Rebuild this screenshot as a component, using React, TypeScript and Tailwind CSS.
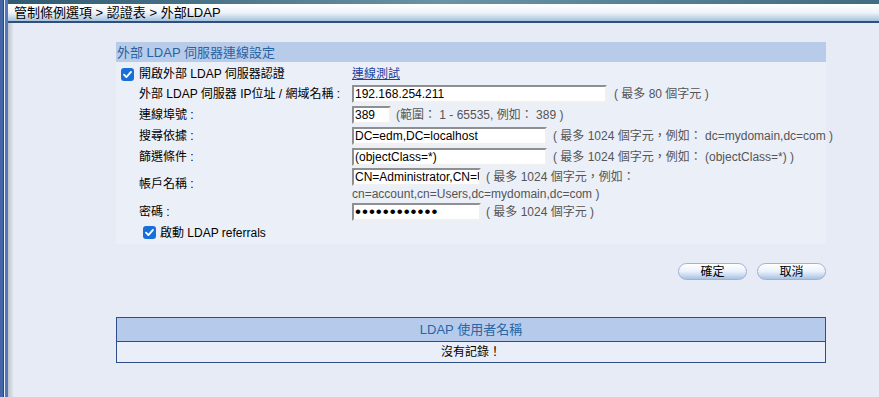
import React from "react";

const font = { fontFamily: '"Liberation Sans", "Noto Sans CJK TC", sans-serif' };

function Check({ className = "" }: { className?: string }) {
  return (
    <span className={`inline-flex h-[13px] w-[13px] items-center justify-center rounded-[3px] bg-[#1a6fd6] ${className}`}>
      <svg width="11" height="11" viewBox="0 0 12 12">
        <path d="M2.2 6.2 L4.8 8.8 L9.8 3.2" fill="none" stroke="#fff" strokeWidth="2" strokeLinecap="round" strokeLinejoin="round" />
      </svg>
    </span>
  );
}

function Input({ w, value, pw = false }: { w: string; value: string; pw?: boolean }) {
  return (
    <input
      readOnly
      type={pw ? "password" : "text"}
      defaultValue={value}
      style={font}
      className={`${w} h-[18px] shrink-0 border-2 border-t-[#8f8f8f] border-l-[#8f8f8f] border-b-[#f0f0f0] border-r-[#f0f0f0] bg-white pl-[1px] ${pw ? "text-[17px] tracking-[1px]" : "text-[12px]"} leading-[14px] text-black outline-none`}
    />
  );
}

function Row({ label, children, h = "h-[21px]" }: { label: string; children: React.ReactNode; h?: string }) {
  return (
    <div className={`flex ${h}`}>
      <div className="w-[236px] shrink-0 pl-[23px] pt-[3px] text-[12px] leading-[14px] text-black">{label}</div>
      <div className="flex items-start pt-[1px]">{children}</div>
    </div>
  );
}

const hint = "text-[12px] leading-[18px] text-[#555] whitespace-nowrap";

export default function App() {
  return (
    <div className="flex h-[397px] w-[879px] overflow-hidden bg-[#e7ebf5]" style={font}>
      <div className="flex h-full w-[8px] shrink-0">
        <div className="w-[3px] bg-[#4566a6]" />
        <div className="w-[1px] bg-[#2c4676]" />
        <div className="w-[1px] bg-[#e8f0ff]" />
        <div className="w-[3px] bg-[#5577b5]" />
      </div>
      <div className="flex flex-1 flex-col">
        <div className="h-[4px] bg-gradient-to-r from-[#2f5a70] via-[#6a93a6] to-[#3f6c82]" />
        <div className="flex h-[17px] items-center bg-gradient-to-b from-white via-[#eef4fa] to-[#a7c3dd] pl-[6px] text-[13px] leading-[15px] text-black">
          管制條例選項 &gt; 認證表 &gt; 外部LDAP
        </div>
        <div className="h-[2px] bg-[#2f4f7c]" />
        <div className="flex-1 bg-gradient-to-r from-[#bfc3cc] via-[#e7ebf5] via-[6px] to-[#e7ebf5] to-[7px] pl-[108px] pt-[19px]">
          <div className="w-[710px]">
            <div className="h-[20px] bg-[#b8cbe9] pl-[1px] pt-[3px] text-[13px] leading-[15px] text-[#2763a3]">
              外部 LDAP 伺服器連線設定
            </div>
            <div className="bg-[#ebeff8] pb-[1px]">
              <div className="flex h-[22px] items-center pt-[2px]">
                <div className="flex w-[236px] items-center pl-[5px]">
                  <Check />
                  <span className="ml-[5px] text-[12px] leading-[14px] text-black">開啟外部 LDAP 伺服器認證</span>
                </div>
                <span className="text-[12px] leading-[14px] text-[#1b3fa0] underline">連線測試</span>
              </div>
              <Row label="外部 LDAP 伺服器 IP位址 / 網域名稱 :" h="h-[21px]">
                <Input w="w-[255px]" value="192.168.254.211" />
                <span className={`${hint} ml-[7px]`}>( 最多 80 個字元 )</span>
              </Row>
              <Row label="連線埠號 :" h="h-[21px]">
                <Input w="w-[39px]" value="389" />
                <span className={`${hint} ml-[5px]`}>(範圍： 1 - 65535, 例如： 389 )</span>
              </Row>
              <Row label="搜尋依據 :" h="h-[21px]">
                <Input w="w-[195px]" value="DC=edm,DC=localhost" />
                <span className={`${hint} ml-[6px]`}>( 最多 1024 個字元，例如： dc=mydomain,dc=com )</span>
              </Row>
              <Row label="篩選條件 :" h="h-[20px]">
                <Input w="w-[195px]" value="(objectClass=*)" />
                <span className={`${hint} ml-[6px]`}>( 最多 1024 個字元，例如： (objectClass=*) )</span>
              </Row>
              <div className="flex h-[35px]">
                <div className="w-[236px] shrink-0 pl-[23px] pt-[10px] text-[12px] leading-[14px] text-black">帳戶名稱 :</div>
                <div className="flex flex-col pt-[1px]">
                  <div className="flex">
                    <Input w="w-[129px]" value="CN=Administrator,CN=Users" />
                    <span className={`${hint} ml-[5px]`}>( 最多 1024 個字元，例如：</span>
                  </div>
                  <span className="text-[12px] leading-[14px] text-[#555] pt-[1px]">cn=account,cn=Users,dc=mydomain,dc=com )</span>
                </div>
              </div>
              <Row label="密碼 :" h="h-[20px]">
                <Input w="w-[129px]" value="password1234" pw />
                <span className={`${hint} ml-[5px]`}>( 最多 1024 個字元 )</span>
              </Row>
              <div className="flex h-[21px] items-center pl-[27px]">
                <Check />
                <span className="ml-[4px] text-[12px] leading-[14px] text-black">啟動 LDAP referrals</span>
              </div>
            </div>
            <div className="mt-[19px] flex justify-end gap-[10px] pr-0">
              <button className="h-[17px] w-[69px] rounded-full border border-[#9fb3cf] bg-gradient-to-b from-white via-[#eaf1fb] to-[#a9c2e4] text-[12px] leading-[14px] text-black">
                確定
              </button>
              <button className="h-[17px] w-[69px] rounded-full border border-[#9fb3cf] bg-gradient-to-b from-white via-[#eaf1fb] to-[#a9c2e4] text-[12px] leading-[14px] text-black">
                取消
              </button>
            </div>
            <div className="mt-[37px] border border-[#2d4f86]">
              <div className="flex h-[24px] items-center justify-center border-b border-[#2d4f86] bg-[#b6cbec] text-[13px] leading-[15px] text-[#2a66a2]">
                LDAP 使用者名稱
              </div>
              <div className="flex h-[20px] items-center justify-center bg-[#e9eef8] text-[12px] leading-[14px] text-black">
                沒有記錄！
              </div>
            </div>
          </div>
        </div>
      </div>
    </div>
  );
}
